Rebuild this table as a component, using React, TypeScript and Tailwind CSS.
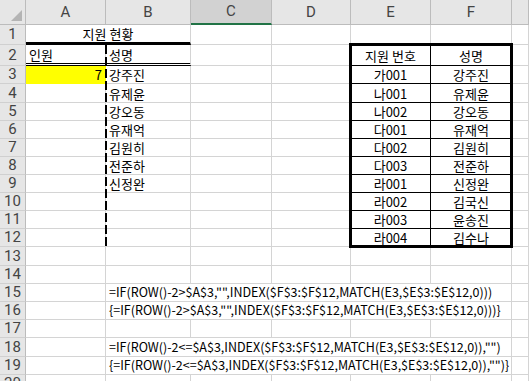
import React from "react";

// Explicit grid placement classes (header row/column included).
const ROW_START = [
  "row-start-1", "row-start-2", "row-start-3", "row-start-4", "row-start-5",
  "row-start-6", "row-start-7", "row-start-8", "row-start-9", "row-start-10",
  "row-start-11", "row-start-12", "row-start-13", "row-start-[14]", "row-start-[15]",
  "row-start-[16]", "row-start-[17]", "row-start-[18]", "row-start-[19]", "row-start-[20]",
  "row-start-[21]",
];
const COL_START = [
  "col-start-1", "col-start-2", "col-start-3", "col-start-4",
  "col-start-5", "col-start-6", "col-start-7", "col-start-8",
];
// G is only a sliver at the window edge, so its label stays out of view
const LETTERS = ["A", "B", "C", "D", "E", "F", ""];
const ROWS = 20;

const NAMES = ["강주진", "유제윤", "강오동", "유재억", "김원히", "전준하", "신정완"];
const LOOKUP: [string, string][] = [
  ["가001", "강주진"],
  ["나001", "유제윤"],
  ["나002", "강오동"],
  ["다001", "유재억"],
  ["다002", "김원히"],
  ["다003", "전준하"],
  ["라001", "신정완"],
  ["라002", "김국신"],
  ["라003", "윤송진"],
  ["라004", "김수나"],
];
const FORMULAS: Record<number, string> = {
  15: '=IF(ROW()-2>$A$3,"",INDEX($F$3:$F$12,MATCH(E3,$E$3:$E$12,0)))',
  16: '{=IF(ROW()-2>$A$3,"",INDEX($F$3:$F$12,MATCH(E3,$E$3:$E$12,0)))}',
  18: '=IF(ROW()-2<=$A$3,INDEX($F$3:$F$12,MATCH(E3,$E$3:$E$12,0)),"")',
  19: '{=IF(ROW()-2<=$A$3,INDEX($F$3:$F$12,MATCH(E3,$E$3:$E$12,0)),"")}',
};

type Content = { text: string; align: "left" | "center" | "right" };

function contentOf(r: number, c: number): Content | null {
  if (r === 2) {
    if (c === 1) return { text: "인원", align: "left" };
    if (c === 2) return { text: "성명", align: "left" };
    if (c === 5) return { text: "지원 번호", align: "center" };
    if (c === 6) return { text: "성명", align: "center" };
  }
  if (r === 3 && c === 1) return { text: "7", align: "right" };
  if (c === 2 && r >= 3 && r <= 9) return { text: NAMES[r - 3], align: "left" };
  if ((c === 5 || c === 6) && r >= 3 && r <= 12) {
    return { text: LOOKUP[r - 3][c - 5], align: "center" };
  }
  return null;
}

function rightBorder(r: number, c: number) {
  if (c === 5 && r >= 2 && r <= 12) return "border-r border-r-black";
  if (r === 3 && c === 1) return "border-r border-r-[#ffff00]";
  return "border-r border-r-[#d4d4d4]";
}

function bottomBorder(r: number, c: number) {
  if (r === 2 && (c === 1 || c === 2)) return "border-b-[3px] border-b-black border-double";
  if ((c === 5 || c === 6) && r >= 2 && r <= 11) return "border-b border-b-black";
  if (r === 3 && c === 1) return "border-b border-b-[#ffff00]";
  return "border-b border-b-[#d4d4d4]";
}

const ALIGN = {
  left: "justify-start pl-[3px]",
  center: "justify-center",
  right: "justify-end pr-[3px]",
};

const CELL_TEXT = "flex items-center whitespace-nowrap text-[13px] leading-none text-black";
const HEAD_TEXT =
  "flex items-center justify-center font-['Roboto',sans-serif] text-[15px] leading-none text-[#444]";

function SelectAllMark() {
  return (
    <svg width="11" height="11" viewBox="0 0 11 11">
      <polygon points="11,0 11,11 0,11" fill="#b4b4b4" />
    </svg>
  );
}

export default function App() {
  const items: React.ReactNode[] = [];

  // column headers
  items.push(
    <div
      key="corner"
      className={`${ROW_START[0]} ${COL_START[0]} flex items-end justify-end pr-[3px] pb-[3px] bg-[#e6e6e6] border-r border-r-[#bcbcbc] border-b border-b-[#bcbcbc]`}
    >
      <SelectAllMark />
    </div>
  );
  LETTERS.forEach((l, i) => {
    const selected = l === "C";
    items.push(
      <div
        key={`h${i}`}
        className={`${ROW_START[0]} ${COL_START[i + 1]} ${HEAD_TEXT} ${
          selected
            ? "bg-[#d2d2d2] border-r border-r-[#bcbcbc] border-b-2 border-b-[#217346]"
            : "bg-[#e6e6e6] border-r border-r-[#bcbcbc] border-b border-b-[#bcbcbc]"
        }`}
      >
        {l}
      </div>
    );
  });

  for (let r = 1; r <= ROWS; r++) {
    // row header
    items.push(
      <div
        key={`rh${r}`}
        className={`${ROW_START[r]} ${COL_START[0]} ${HEAD_TEXT} bg-[#e6e6e6] border-r border-r-[#bcbcbc] border-b border-b-[#d0d0d0]`}
      >
        {r}
      </div>
    );

    if (r === 1) {
      // merged A1:B1 title
      items.push(
        <div
          key="title"
          className={`${ROW_START[1]} ${COL_START[1]} col-span-2 ${CELL_TEXT} justify-center border-r border-r-[#d4d4d4] border-b-[3px] border-b-black`}
        >
          지원 현황
        </div>
      );
      for (let c = 3; c <= 7; c++) {
        items.push(
          <div
            key={`c${r}-${c}`}
            className={`${ROW_START[r]} ${COL_START[c]} ${rightBorder(r, c)} ${bottomBorder(r, c)}`}
          />
        );
      }
      continue;
    }

    if (FORMULAS[r]) {
      items.push(
        <div
          key={`a${r}`}
          className={`${ROW_START[r]} ${COL_START[1]} ${rightBorder(r, 1)} ${bottomBorder(r, 1)}`}
        />
      );
      // formula text overflows across B:F
      items.push(
        <div
          key={`f${r}`}
          className={`${ROW_START[r]} ${COL_START[2]} col-span-5 flex items-center whitespace-nowrap text-[12.5px] leading-none text-black justify-start pl-[3px] border-r border-r-[#d4d4d4] border-b border-b-[#d4d4d4]`}
        >
          {FORMULAS[r]}
        </div>
      );
      items.push(
        <div
          key={`g${r}`}
          className={`${ROW_START[r]} ${COL_START[7]} ${rightBorder(r, 7)} ${bottomBorder(r, 7)}`}
        />
      );
      continue;
    }

    for (let c = 1; c <= 7; c++) {
      const content = contentOf(r, c);
      const fill = r === 3 && c === 1 ? "bg-[#ffff00]" : "";
      items.push(
        <div
          key={`c${r}-${c}`}
          className={`${ROW_START[r]} ${COL_START[c]} ${CELL_TEXT} ${
            content ? ALIGN[content.align] : ""
          } ${fill} ${rightBorder(r, c)} ${bottomBorder(r, c)}`}
        >
          {content?.text}
        </div>
      );
    }
  }

  return (
    <div className="w-[529px] h-[381px] overflow-hidden bg-white font-['Noto_Sans_CJK_KR',sans-serif]">
      <div className="grid grid-cols-[26px_80px_85px_81px_79px_80px_81px_1fr] grid-rows-[25px_20px_21px_18px_19px_18px_18px_18px_18px_18px_18px_18px_18px_19px_18px_18px_18px_18px_19px_18px_18px]">
        {items}
        {/* medium dashed border on the right edge of A2:A12 */}
        <div className="col-start-2 row-start-3 row-span-11 justify-self-end w-[2px] -mr-[1px] pointer-events-none bg-[repeating-linear-gradient(to_bottom,#000_0px,#000_9px,transparent_9px,transparent_12px)]" />
        {/* thick outline around E2:F12 */}
        <div className="col-start-6 col-span-2 row-start-3 row-span-11 -ml-[2px] -mt-[2px] -mr-[1px] -mb-[1px] border-[3px] border-black pointer-events-none" />
      </div>
    </div>
  );
}
